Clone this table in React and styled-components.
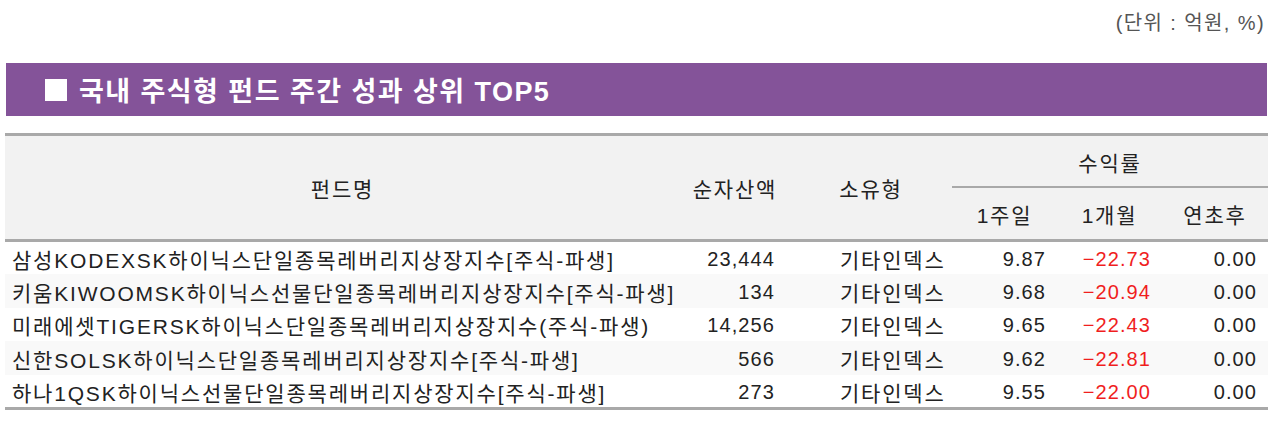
import React from "react";
import styled, { createGlobalStyle } from "styled-components";

const GlobalStyle = createGlobalStyle`
  body {
    margin: 0;
    background: #ffffff;
    font-family: "Liberation Sans", "Noto Sans CJK KR", sans-serif;
    color: #222222;
  }
`;

const funds = [
  { name: "삼성KODEXSK하이닉스단일종목레버리지상장지수[주식-파생]", asset: "23,444", type: "기타인덱스", w1: "9.87", m1: "-22.73", ytd: "0.00" },
  { name: "키움KIWOOMSK하이닉스선물단일종목레버리지상장지수[주식-파생]", asset: "134", type: "기타인덱스", w1: "9.68", m1: "-20.94", ytd: "0.00" },
  { name: "미래에셋TIGERSK하이닉스단일종목레버리지상장지수(주식-파생)", asset: "14,256", type: "기타인덱스", w1: "9.65", m1: "-22.43", ytd: "0.00" },
  { name: "신한SOLSK하이닉스단일종목레버리지상장지수[주식-파생]", asset: "566", type: "기타인덱스", w1: "9.62", m1: "-22.81", ytd: "0.00" },
  { name: "하나1QSK하이닉스선물단일종목레버리지상장지수[주식-파생]", asset: "273", type: "기타인덱스", w1: "9.55", m1: "-22.00", ytd: "0.00" },
];

const App = () => {
  return (
    <Page>
      <GlobalStyle />
      <Unit>(단위 : 억원, %)</Unit>
      <TitleBar>
        <Square />
        국내 주식형 펀드 주간 성과 상위 TOP5
      </TitleBar>
      <Table>
        <colgroup>
          <col style={{ width: 675 }} />
          <col style={{ width: 110 }} />
          <col style={{ width: 162 }} />
          <col style={{ width: 105 }} />
          <col style={{ width: 105 }} />
          <col style={{ width: 106 }} />
        </colgroup>
        <thead>
          <tr>
            <Th rowSpan={2}>펀드명</Th>
            <Th rowSpan={2}>순자산액</Th>
            <Th rowSpan={2}>소유형</Th>
            <GroupTh colSpan={3}>수익률</GroupTh>
          </tr>
          <tr>
            <SubTh>1주일</SubTh>
            <SubTh>1개월</SubTh>
            <SubTh>연초후</SubTh>
          </tr>
        </thead>
        <tbody>
          {funds.map((f, i) => (
            <Row key={f.name} $striped={i % 2 === 1}>
              <NameCell>{f.name}</NameCell>
              <NumCell $pad={15}>{f.asset}</NumCell>
              <TypeCell>{f.type}</TypeCell>
              <NumCell>{f.w1}</NumCell>
              <NumCell $red>{f.m1.replace("-", "−")}</NumCell>
              <NumCell>{f.ytd}</NumCell>
            </Row>
          ))}
        </tbody>
      </Table>
    </Page>
  );
};

export default App;

const Page = styled.div`
  width: 1263px;
  padding: 0 10px 0 5px;
`;

const Unit = styled.div`
  height: 46px;
  line-height: 46px;
  text-align: right;
  padding-right: 3px;
  font-size: 20px;
  color: #555555;
  letter-spacing: 1.4px;
`;

const TitleBar = styled.div`
  margin: 17px 1px 0 1px;
  height: 53px;
  background-color: #845399;
  color: #ffffff;
  display: flex;
  align-items: center;
  padding-left: 39px;
  font-size: 27px;
  font-weight: bold;
  letter-spacing: 1.45px;
`;

const Square = styled.span`
  width: 22px;
  height: 22px;
  background: #ffffff;
  margin-right: 12px;
`;

const Table = styled.table`
  margin-top: 17px;
  width: 1263px;
  table-layout: fixed;
  border-collapse: collapse;
  border-top: 3px solid #a9a9a9;
  border-bottom: 3px solid #a9a9a9;
  font-size: 21px;
  letter-spacing: 1.8px;
`;

const Th = styled.th`
  background: #f2f2f2;
  font-weight: normal;
  text-align: center;
  padding: 0;
  border-bottom: 3px solid #a9a9a9;
`;

const GroupTh = styled(Th)`
  height: 49px;
  border-bottom: 2px solid #a9a9a9;
  padding-top: 1px;
`;

const SubTh = styled(Th)`
  height: 51px;
`;

const Row = styled.tr`
  height: 33.6px;
  background: ${(p) => (p.$striped ? "#f9f9f9" : "#ffffff")};
`;

const NameCell = styled.td`
  padding: 2px 0 0 7px;
  white-space: nowrap;
  overflow: hidden;
`;

const NumCell = styled.td`
  padding: 3px ${(p) => p.$pad || 11}px 0 0;
  text-align: right;
  font-size: 20px;
  letter-spacing: 1.1px;
  color: ${(p) => (p.$red ? "#f01e1e" : "#222222")};
`;

const TypeCell = styled.td`
  padding: 2px 0 0 50px;
  white-space: nowrap;
`;
